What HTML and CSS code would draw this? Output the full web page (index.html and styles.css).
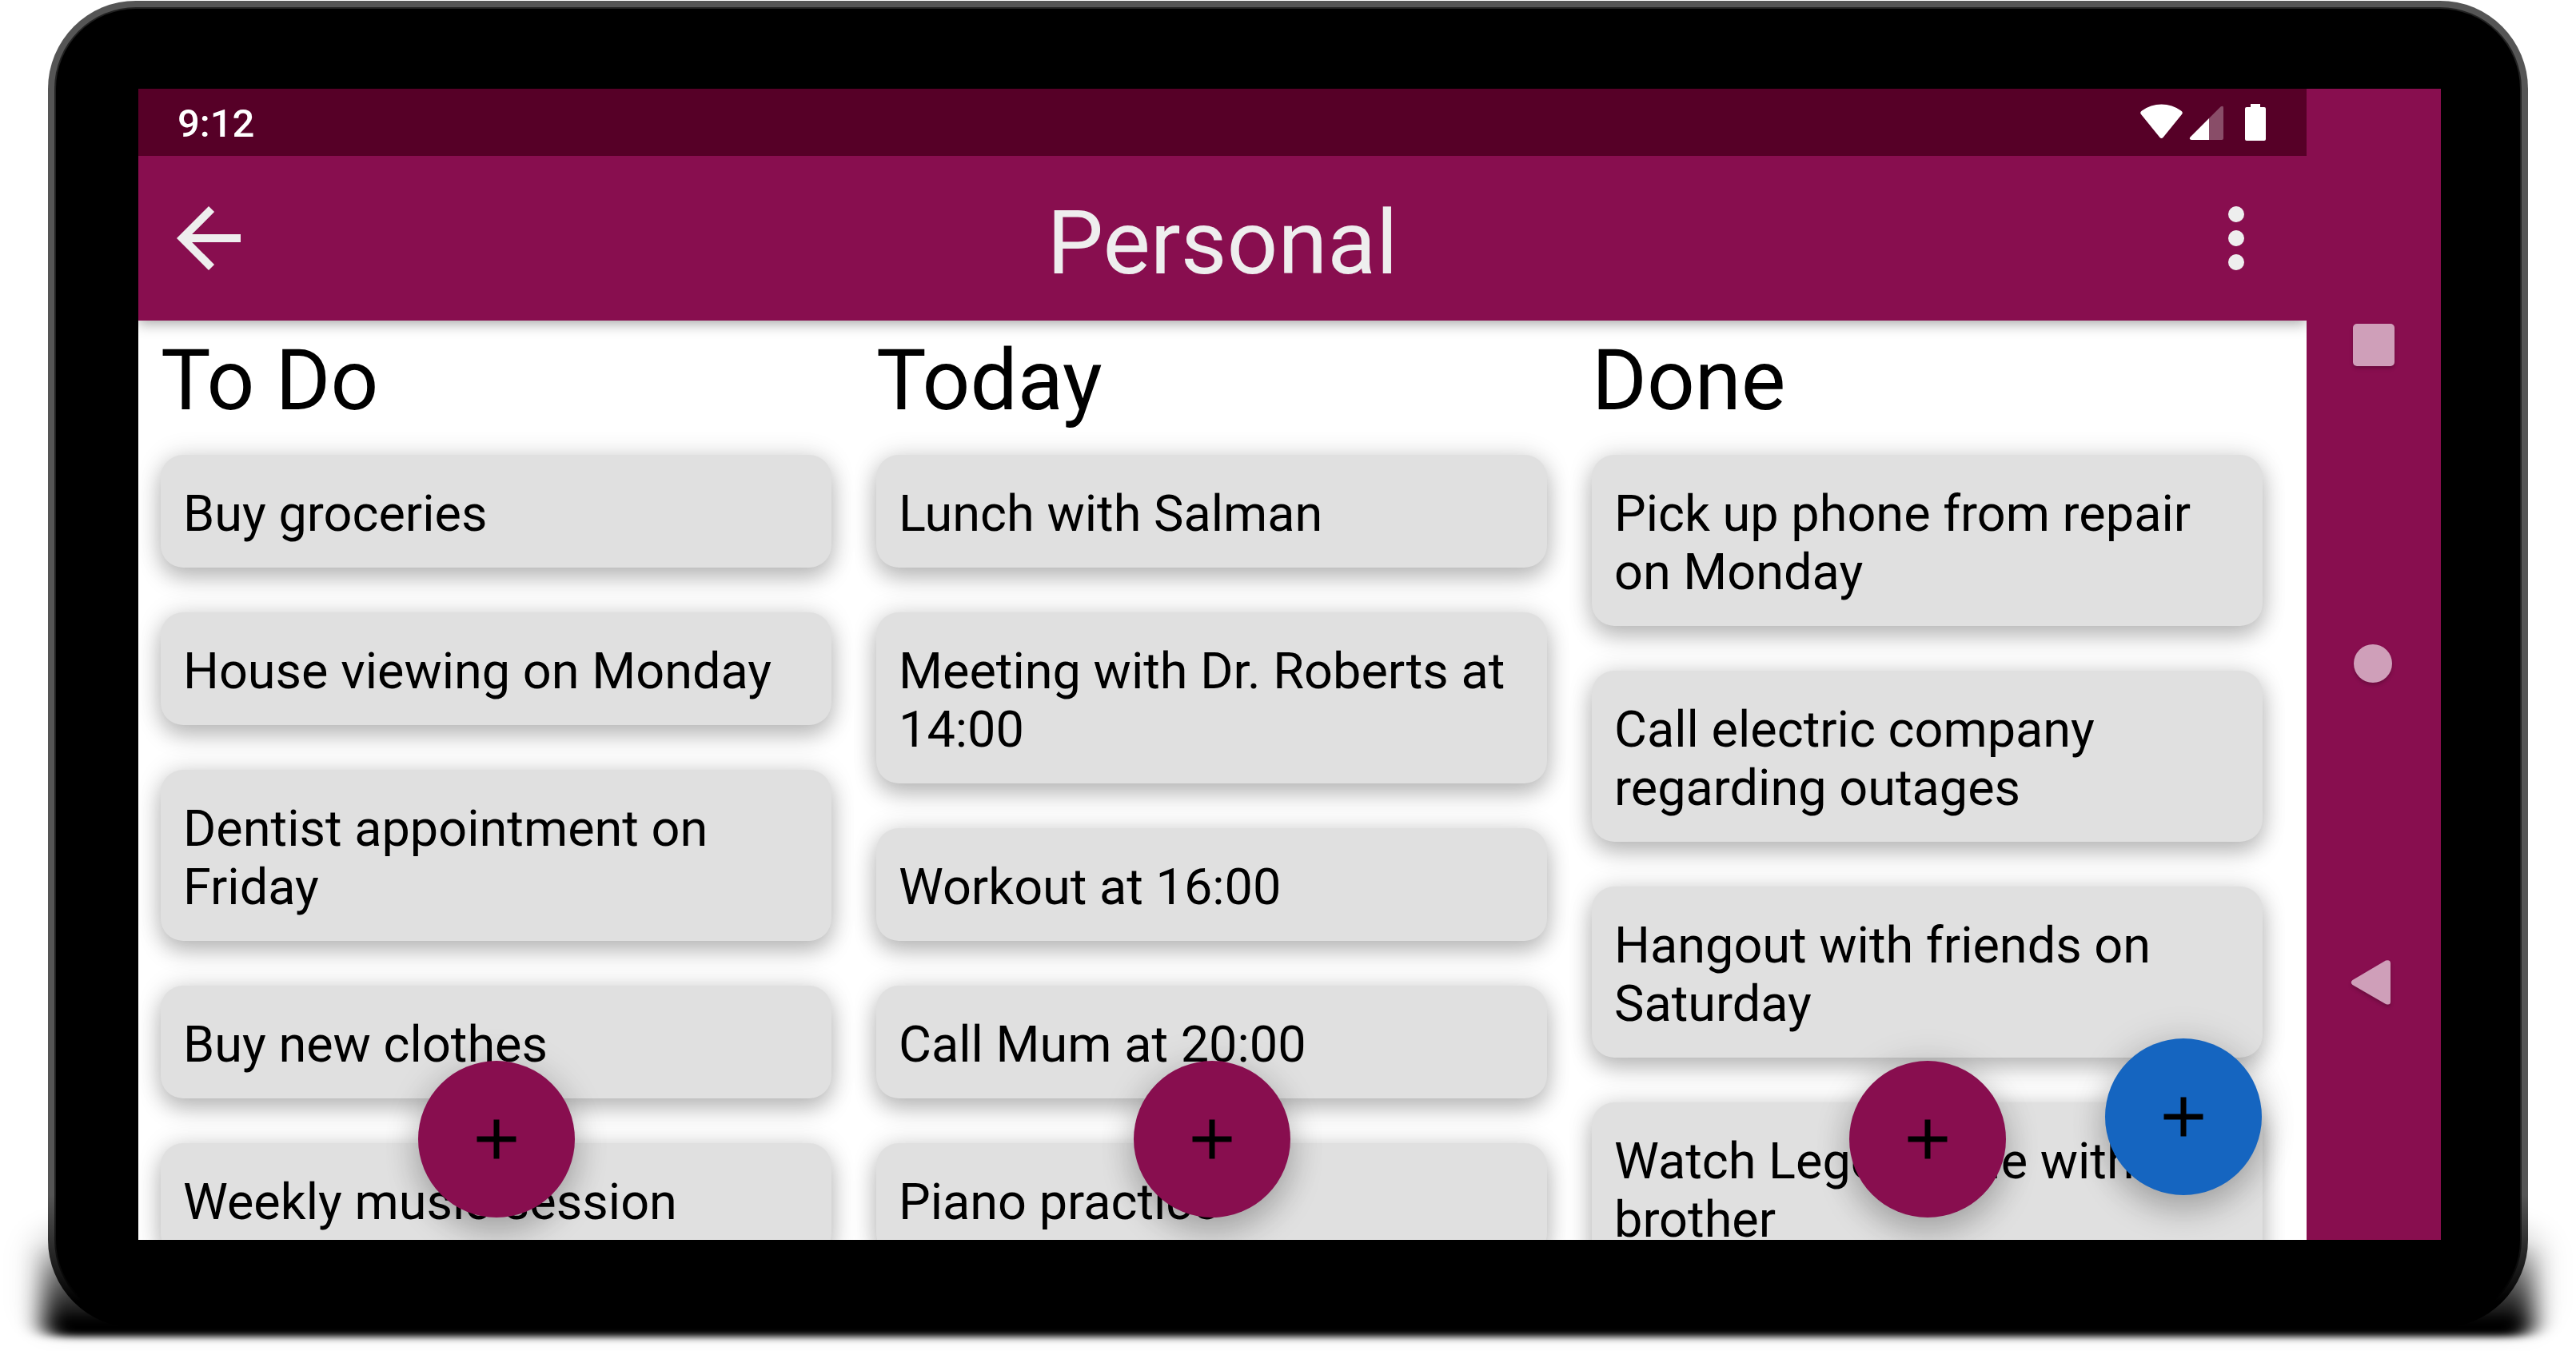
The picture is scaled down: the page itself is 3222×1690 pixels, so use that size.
FILE: index.html
```html
<!DOCTYPE html>
<html lang="en">
<head>
<meta charset="utf-8">
<title>Personal</title>
<link rel="stylesheet" href="styles.css">
</head>
<body>
<div class="device">
  <svg class="device-shadow" aria-hidden="true">
    <defs>
      <linearGradient id="fade" x1="0" y1="0" x2="0" y2="1">
        <stop offset="0" stop-opacity="0"/>
        <stop offset=".35" stop-opacity=".5"/>
        <stop offset=".85" stop-opacity="1"/>
      </linearGradient>
      <filter id="soft" x="-10%" y="-40%" width="120%" height="180%"><feGaussianBlur stdDeviation="15 4"/></filter>
      <filter id="haze" x="-10%" y="-40%" width="120%" height="180%"><feGaussianBlur stdDeviation="18 12"/></filter>
    </defs>
    <rect class="haze" filter="url(#haze)"/>
    <rect class="core" fill="url(#fade)" filter="url(#soft)"/>
  </svg>
  <div class="bezel">
    <div class="screen">
      <div class="app">
        <div class="status-bar">
          <span class="clock">9:12</span>
          <svg class="status-icons" width="157" height="46" viewBox="0 0 157 46" aria-label="Wi-Fi, signal, battery">
            <path fill="#fff" d="M1 13Q-1 10.500 2 8.500Q13 .5 26.500 .5Q40 .5 51 8.500Q54 10.500 52 13L28.500 42Q26.500 44 24.500 42Z"/>
            <path fill="#fff" fill-opacity=".3" d="M86 18L100.500 3.500Q104 1.500 104 5V43Q104 45 102 45H86Z"/>
            <path fill="#fff" d="M86 18V45H64Q60.500 44.500 62.500 41.500Z"/>
            <path fill="#fff" d="M138 0H150V4H155Q157 4 157 6V44Q157 46 155 46H133Q131 46 131 44V6Q131 4 133 4H138Z"/>
          </svg>
        </div>
        <header class="app-bar">
          <button class="icon-button" aria-label="Back">
            <svg width="120" height="120" viewBox="0 0 24 24"><path fill="#eee" d="M20 11H7.830l5.590-5.590L12 4l-8 8 8 8 1.410-1.410L7.830 13H20z"/></svg>
          </button>
          <h1 class="title">Personal</h1>
          <button class="icon-button" aria-label="More options">
            <svg width="120" height="120" viewBox="0 0 24 24"><path fill="#eee" d="M12 8a2 2 0 1 0 0-4 2 2 0 0 0 0 4zm0 2a2 2 0 1 0 0 4 2 2 0 0 0 0-4zm0 6a2 2 0 1 0 0 4 2 2 0 0 0 0-4z"/></svg>
          </button>
        </header>
        <main class="board">
          <section class="column">
            <h2 class="column-title">To Do</h2>
            <ul class="cards">
              <li class="card">Buy groceries</li>
              <li class="card">House viewing on Monday</li>
              <li class="card">Dentist appointment on Friday</li>
              <li class="card">Buy new clothes</li>
              <li class="card">Weekly music session</li>
            </ul>
            <button class="fab" aria-label="Add task to To Do"><svg width="84" height="84" viewBox="0 0 24 24"><path d="M19 13h-6v6h-2v-6H5v-2h6V5h2v6h6z"/></svg></button>
          </section>
          <section class="column">
            <h2 class="column-title">Today</h2>
            <ul class="cards">
              <li class="card">Lunch with Salman</li>
              <li class="card">Meeting with Dr. Roberts at 14:00</li>
              <li class="card">Workout at 16:00</li>
              <li class="card">Call Mum at 20:00</li>
              <li class="card">Piano practice</li>
            </ul>
            <button class="fab" aria-label="Add task to Today"><svg width="84" height="84" viewBox="0 0 24 24"><path d="M19 13h-6v6h-2v-6H5v-2h6V5h2v6h6z"/></svg></button>
          </section>
          <section class="column">
            <h2 class="column-title">Done</h2>
            <ul class="cards">
              <li class="card">Pick up phone from repair on Monday</li>
              <li class="card">Call electric company regarding outages</li>
              <li class="card">Hangout with friends on Saturday</li>
              <li class="card">Watch Lego Movie with brother</li>
            </ul>
            <button class="fab" aria-label="Add task to Done"><svg width="84" height="84" viewBox="0 0 24 24"><path d="M19 13h-6v6h-2v-6H5v-2h6V5h2v6h6z"/></svg></button>
          </section>
          <button class="fab fab-list" aria-label="Add list"><svg width="84" height="84" viewBox="0 0 24 24"><path d="M19 13h-6v6h-2v-6H5v-2h6V5h2v6h6z"/></svg></button>
        </main>
      </div>
      <nav class="system-nav" aria-label="System">
        <button class="nav-button" aria-label="Recent apps"><svg width="56" height="60" viewBox="0 0 56 60"><rect x="2" y="3" width="52" height="53" rx="5"/></svg></button>
        <button class="nav-button" aria-label="Home"><svg width="56" height="60" viewBox="0 0 56 60"><circle cx="27" cy="29" r="24"/></svg></button>
        <button class="nav-button" aria-label="System back"><svg width="56" height="60" viewBox="0 0 56 60"><path d="M1.500 26L43 1.500Q49 0 49 5V53Q49 58 43 56L1.500 32Q-2 29 1.500 26Z"/></svg></button>
      </nav>
    </div>
  </div>
</div>
</body>
</html>
```
FILE: styles.css
```css
* {
  box-sizing: border-box;
}

body {
  margin: 0;
  background: #fff;
  color: #000;
  font-family: Roboto, "Noto Sans", sans-serif;
  overflow: hidden;
}

h1,
h2,
ul {
  margin: 0;
  padding: 0;
  font-weight: 400;
}

button {
  display: flex;
  align-items: center;
  justify-content: center;
  padding: 0;
  border: 0;
  background: none;
  cursor: pointer;
}

.device {
  position: relative;
  height: 100vh;
  padding: 1px 60px 29px;
}

/* contact shadow that spreads out under the lower edge of the device */
.device-shadow {
  position: absolute;
  left: 0;
  bottom: 0;
  width: 100%;
  height: 240px;
}

.haze {
  x: 40px;
  y: 80px;
  width: calc(100% - 80px);
  height: 140px;
  rx: 40px;
  fill: rgba(0, 0, 0, 0.12);
}

.core {
  x: 54px;
  y: 100px;
  width: calc(100% - 108px);
  height: 122px;
  rx: 20px;
}

.bezel {
  position: relative;
  height: 100%;
  padding: 10px;
  border-radius: 110px;
  background: linear-gradient(#555 90%, #000 98%);
}

.screen {
  display: flex;
  height: 100%;
  border: 100px solid #000;
  border-left-width: 103px;
  border-right-width: 99px;
  border-radius: 100px;
  background: #000;
  box-shadow: 0 0 0 2px rgba(0, 0, 0, 0.6);
}

.app {
  display: flex;
  flex: 1;
  flex-direction: column;
  min-width: 0;
  background: #fff;
}

.status-bar {
  display: flex;
  align-items: center;
  justify-content: space-between;
  height: 84px;
  padding: 0 51px 0 49px;
  background: #560027;
  color: #fff;
}

.clock {
  padding-top: 4px;
  font-size: 49px;
  font-weight: 500;
  line-height: 56px;
}

.app-bar {
  position: relative;
  z-index: 1;
  display: flex;
  align-items: center;
  justify-content: space-between;
  height: 206px;
  padding: 0 28px;
  background: #880e4f;
  box-shadow: 0 4px 16px rgba(0, 0, 0, 0.35);
  clip-path: inset(0 0 -40px);
}

.title {
  padding-top: 12px;
  color: #eee;
  font-size: 112px;
  line-height: 132px;
}

.board {
  position: relative;
  display: grid;
  flex: 1;
  grid-template-columns: repeat(3, 1fr);
  min-height: 0;
  padding-right: 27px;
  overflow: hidden;
}

.column {
  position: relative;
  min-width: 0;
  padding: 14px 28px 0;
  overflow: hidden;
}

.column-title {
  font-size: 105px;
  line-height: 124px;
}

.cards {
  display: flex;
  flex-direction: column;
  gap: 56px;
  padding-top: 30px;
  list-style: none;
}

.card {
  padding: 37px 28px 31px;
  border-radius: 28px;
  background: #e0e0e0;
  box-shadow: 0 14px 28px rgba(0, 0, 0, 0.22), 0 0 32px rgba(0, 0, 0, 0.14);
  font-size: 63px;
  line-height: 73px;
}

.fab {
  position: absolute;
  bottom: 28px;
  left: calc(50% - 98px);
  width: 196px;
  height: 196px;
  border-radius: 50%;
  background: #880e4f;
  box-shadow: 0 20px 42px rgba(0, 0, 0, 0.22), 0 0 48px rgba(0, 0, 0, 0.12);
}

.fab-list {
  right: 56px;
  bottom: 56px;
  left: auto;
  background: #1565c0;
}

.system-nav {
  display: flex;
  flex-direction: column;
  width: 168px;
  padding: 122px 0;
  background: #880e4f;
}

.nav-button {
  flex: 1;
}

.nav-button svg {
  overflow: visible;
  fill: #cf9fb9;
  filter: drop-shadow(0 3px 2px rgba(0, 0, 0, 0.2));
}
```
